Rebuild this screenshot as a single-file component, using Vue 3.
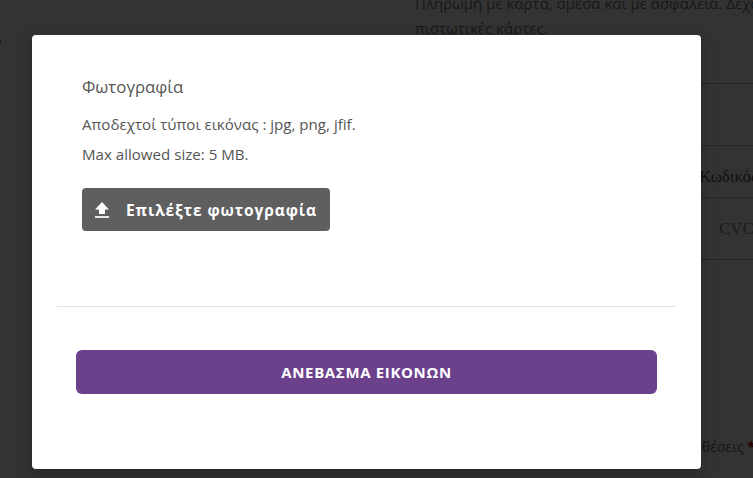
<template>
  <div class="page">
    <div class="behind">
      <div class="left-col">
        <span class="left-mark">s</span>
      </div>
      <div class="right-col">
        <p class="pay-text">Πληρωμή με κάρτα, άμεσα και με ασφάλεια. Δεχόμαστε πιστωτικές κάρτες.</p>
        <div class="pay-row first"></div>
        <div class="pay-row code"><span>Κωδικός</span></div>
        <div class="pay-row cvc"><span>CVC</span></div>
        <p class="terms">Αποδέχομαι τους όρους και τις προϋποθέσεις <b>*</b></p>
      </div>
    </div>

    <div class="backdrop">
      <div class="modal">
        <div class="modal-body">
          <h4 class="modal-title">Φωτογραφία</h4>
          <p class="hint">Αποδεχτοί τύποι εικόνας : jpg, png, jfif.</p>
          <p class="hint">Max allowed size: 5 MB.</p>
          <button class="btn-pick">
            <svg class="upload-icon" width="16" height="18" viewBox="0 0 16 18">
              <path d="M8 1 L15 8.5 H11 V13 H5 V8.5 H1 Z" fill="#fff" />
              <rect x="1" y="15" width="14" height="2" fill="#e6e6e6" />
            </svg>
            <span>Επιλέξτε φωτογραφία</span>
          </button>
        </div>
        <hr class="divider" />
        <div class="modal-footer">
          <button class="btn-upload">ΑΝΕΒΑΣΜΑ ΕΙΚΟΝΩΝ</button>
        </div>
      </div>
    </div>
  </div>
</template>

<script setup>
</script>

<style>
html, body { margin: 0; background: #fff; }
</style>

<style scoped>
.page { position: relative; width: 753px; height: 478px; overflow: hidden; font-family: "Open Sans", "Noto Sans", sans-serif; }

.behind { display: flex; height: 100%; background: #fff; }
.left-col { width: 415px; flex-shrink: 0; padding-top: 29px; box-sizing: border-box; }
.left-mark { display: block; font-size: 14px; color: #777; margin-left: -5px; }
.right-col { flex: 1; min-width: 0; display: flex; flex-direction: column; }
.pay-text { width: 400px; margin: -9px 0 0; font-size: 15px; line-height: 25px; color: #777; }
.pay-row { margin-left: -15px; width: 360px; border-bottom: 1px solid #bbb; box-sizing: border-box; font-family: "Liberation Serif", serif; font-size: 17px; color: #555; white-space: nowrap; display: flex; align-items: center; }
.pay-row.first { height: 63px; border-top: 1px solid #bbb; margin-top: 42px; }
.pay-row.code { height: 52px; padding-left: 299px; padding-top: 10px; }
.pay-row.cvc { height: 62px; padding-left: 319px; color: #888; }
.terms { margin: 177px 0 0 -180px; width: 520px; text-align: right; font-size: 14px; color: #777; white-space: nowrap; }
.terms b { color: #a00; }

.backdrop { position: absolute; inset: 0; background: rgba(0, 0, 0, .8); }
.modal { position: absolute; left: 32px; top: 35px; width: 669px; height: 434px; background: #fff; border-radius: 4px; box-shadow: 0 5px 15px rgba(0, 0, 0, .25); }

.modal-body { padding: 42px 50px 0; height: 271px; box-sizing: border-box; }
.modal-title { margin: 0 0 17px; font-size: 16.8px; line-height: 20px; font-weight: 400; color: #555; }
.hint { margin: 0 0 10px; font-size: 15.1px; line-height: 20px; color: #555; }

.btn-pick { display: flex; align-items: center; gap: 16px; width: 248px; height: 43px; margin-top: 24px; padding: 0 0 0 12px; background: #5f5f5f; color: #fff; border: none; border-radius: 4px; font-family: inherit; font-size: 15.5px; font-weight: 700; letter-spacing: .9px; }
.upload-icon { flex-shrink: 0; }

.divider { margin: 0 25px; border: none; border-top: 1px solid #e2e2e2; }

.modal-footer { padding: 43px 44px 0; }
.btn-upload { display: block; width: 100%; height: 44px; background: #6b418c; color: #fff; border: none; border-radius: 6px; font-family: inherit; font-size: 15px; font-weight: 700; letter-spacing: .65px; }
</style>
